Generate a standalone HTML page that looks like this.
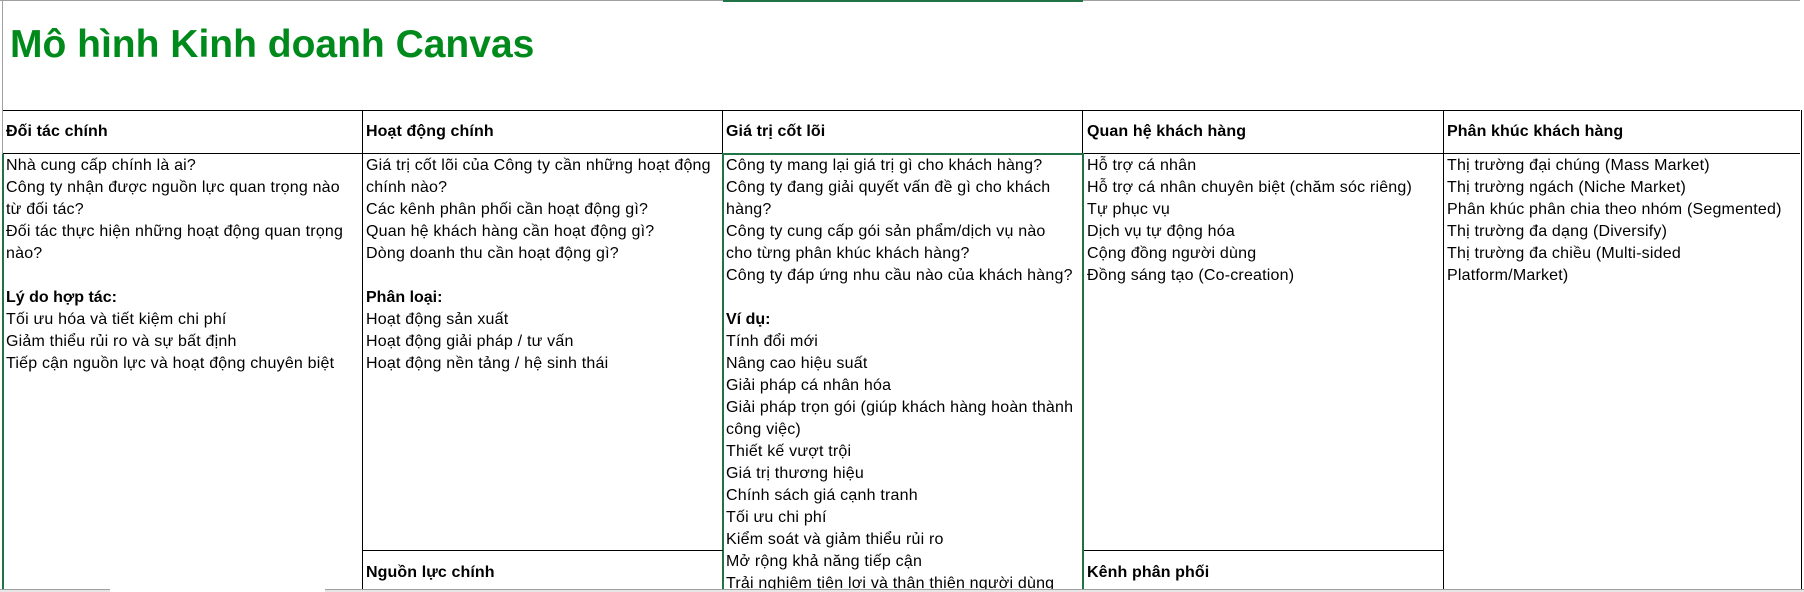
<!DOCTYPE html>
<html><head><meta charset="utf-8"><style>
html,body{margin:0;padding:0;background:#fff;width:1804px;height:592px;overflow:hidden;position:relative;font-family:"Liberation Sans",Arial,sans-serif;color:#000}
.a{position:absolute}
.t{position:absolute;font-size:16px;letter-spacing:0.2px;line-height:22px;white-space:nowrap}
.t div{height:22px}
b{font-weight:bold;letter-spacing:0}
.h{position:absolute;font-size:16px;letter-spacing:0.1px;font-weight:bold;line-height:22px;white-space:nowrap;top:121px}
</style></head><body>
<div class="a" style="left:0;top:0;width:1800px;height:1px;background:#a0a0a0"></div>
<div class="a" style="left:723px;top:0;width:360px;height:2px;background:#217346"></div>
<div class="a" style="left:2px;top:0;width:1px;height:589px;background:#a0a0a0"></div>
<div class="a" style="left:2px;top:154px;width:2px;height:435px;background:#217346"></div>
<div class="a" style="left:10px;top:24px;font-size:39px;font-weight:bold;color:#008a1c;line-height:42px;white-space:nowrap">Mô hình Kinh doanh Canvas</div>

<div class="a" style="left:3px;top:110px;width:1797px;height:1px;background:#000"></div>
<div class="a" style="left:3px;top:153px;width:1797px;height:1px;background:#000"></div>
<div class="a" style="left:362px;top:110px;width:1px;height:479px;background:#000"></div>
<div class="a" style="left:722px;top:110px;width:1px;height:44px;background:#000"></div>
<div class="a" style="left:1443px;top:110px;width:1px;height:479px;background:#000"></div>
<div class="a" style="left:1801px;top:110px;width:1px;height:479px;background:#000"></div>
<div class="a" style="left:1082px;top:110px;width:1px;height:44px;background:#000"></div>
<div class="a" style="left:722px;top:153px;width:361px;height:2px;background:#217346"></div>
<div class="a" style="left:722px;top:153px;width:2px;height:436px;background:#217346"></div>
<div class="a" style="left:1082px;top:153px;width:2px;height:436px;background:#217346"></div>
<div class="a" style="left:362px;top:550px;width:361px;height:1px;background:#000"></div>
<div class="a" style="left:1084px;top:550px;width:359px;height:1px;background:#000"></div>

<div class="h" style="left:6px">Đối tác chính</div>
<div class="h" style="left:366px">Hoạt động chính</div>
<div class="h" style="left:726px">Giá trị cốt lõi</div>
<div class="h" style="left:1087px">Quan hệ khách hàng</div>
<div class="h" style="left:1447px">Phân khúc khách hàng</div>

<div class="t" style="left:6px;top:155px">
<div>Nhà cung cấp chính là ai?</div><div>Công ty nhận được nguồn lực quan trọng nào</div><div>từ đối tác?</div><div>Đối tác thực hiện những hoạt động quan trọng</div><div>nào?</div><div></div><div><b>Lý do hợp tác:</b></div><div>Tối ưu hóa và tiết kiệm chi phí</div><div>Giảm thiểu rủi ro và sự bất định</div><div>Tiếp cận nguồn lực và hoạt động chuyên biệt</div></div>

<div class="t" style="left:366px;top:155px">
<div>Giá trị cốt lõi của Công ty cần những hoạt động</div><div>chính nào?</div><div>Các kênh phân phối cần hoạt động gì?</div><div>Quan hệ khách hàng cần hoạt động gì?</div><div>Dòng doanh thu cần hoạt động gì?</div><div></div><div><b>Phân loại:</b></div><div>Hoạt động sản xuất</div><div>Hoạt động giải pháp / tư vấn</div><div>Hoạt động nền tảng / hệ sinh thái</div></div>

<div class="t" style="left:726px;top:155px">
<div>Công ty mang lại giá trị gì cho khách hàng?</div><div>Công ty đang giải quyết vấn đề gì cho khách</div><div>hàng?</div><div>Công ty cung cấp gói sản phẩm/dịch vụ nào</div><div>cho từng phân khúc khách hàng?</div><div>Công ty đáp ứng nhu cầu nào của khách hàng?</div><div></div><div><b>Ví dụ:</b></div><div>Tính đổi mới</div><div>Nâng cao hiệu suất</div><div>Giải pháp cá nhân hóa</div><div>Giải pháp trọn gói (giúp khách hàng hoàn thành</div><div>công việc)</div><div>Thiết kế vượt trội</div><div>Giá trị thương hiệu</div><div>Chính sách giá cạnh tranh</div><div>Tối ưu chi phí</div><div>Kiểm soát và giảm thiểu rủi ro</div><div>Mở rộng khả năng tiếp cận</div><div>Trải nghiệm tiện lợi và thân thiện người dùng</div></div>

<div class="t" style="left:1087px;top:155px">
<div>Hỗ trợ cá nhân</div><div>Hỗ trợ cá nhân chuyên biệt (chăm sóc riêng)</div><div>Tự phục vụ</div><div>Dịch vụ tự động hóa</div><div>Cộng đồng người dùng</div><div>Đồng sáng tạo (Co-creation)</div></div>

<div class="t" style="left:1447px;top:155px">
<div>Thị trường đại chúng (Mass Market)</div><div>Thị trường ngách (Niche Market)</div><div>Phân khúc phân chia theo nhóm (Segmented)</div><div>Thị trường đa dạng (Diversify)</div><div>Thị trường đa chiều (Multi-sided</div><div>Platform/Market)</div></div>

<div class="h" style="left:366px;top:562px">Nguồn lực chính</div>
<div class="h" style="left:1087px;top:562px">Kênh phân phối</div>

<div class="a" style="left:0;top:589px;width:110px;height:3px;background:#e6e6e6;border-top:1px solid #a0a0a0"></div>
<div class="a" style="left:325px;top:589px;width:1479px;height:3px;background:#e6e6e6;border-top:1px solid #a0a0a0"></div>
</body></html>
